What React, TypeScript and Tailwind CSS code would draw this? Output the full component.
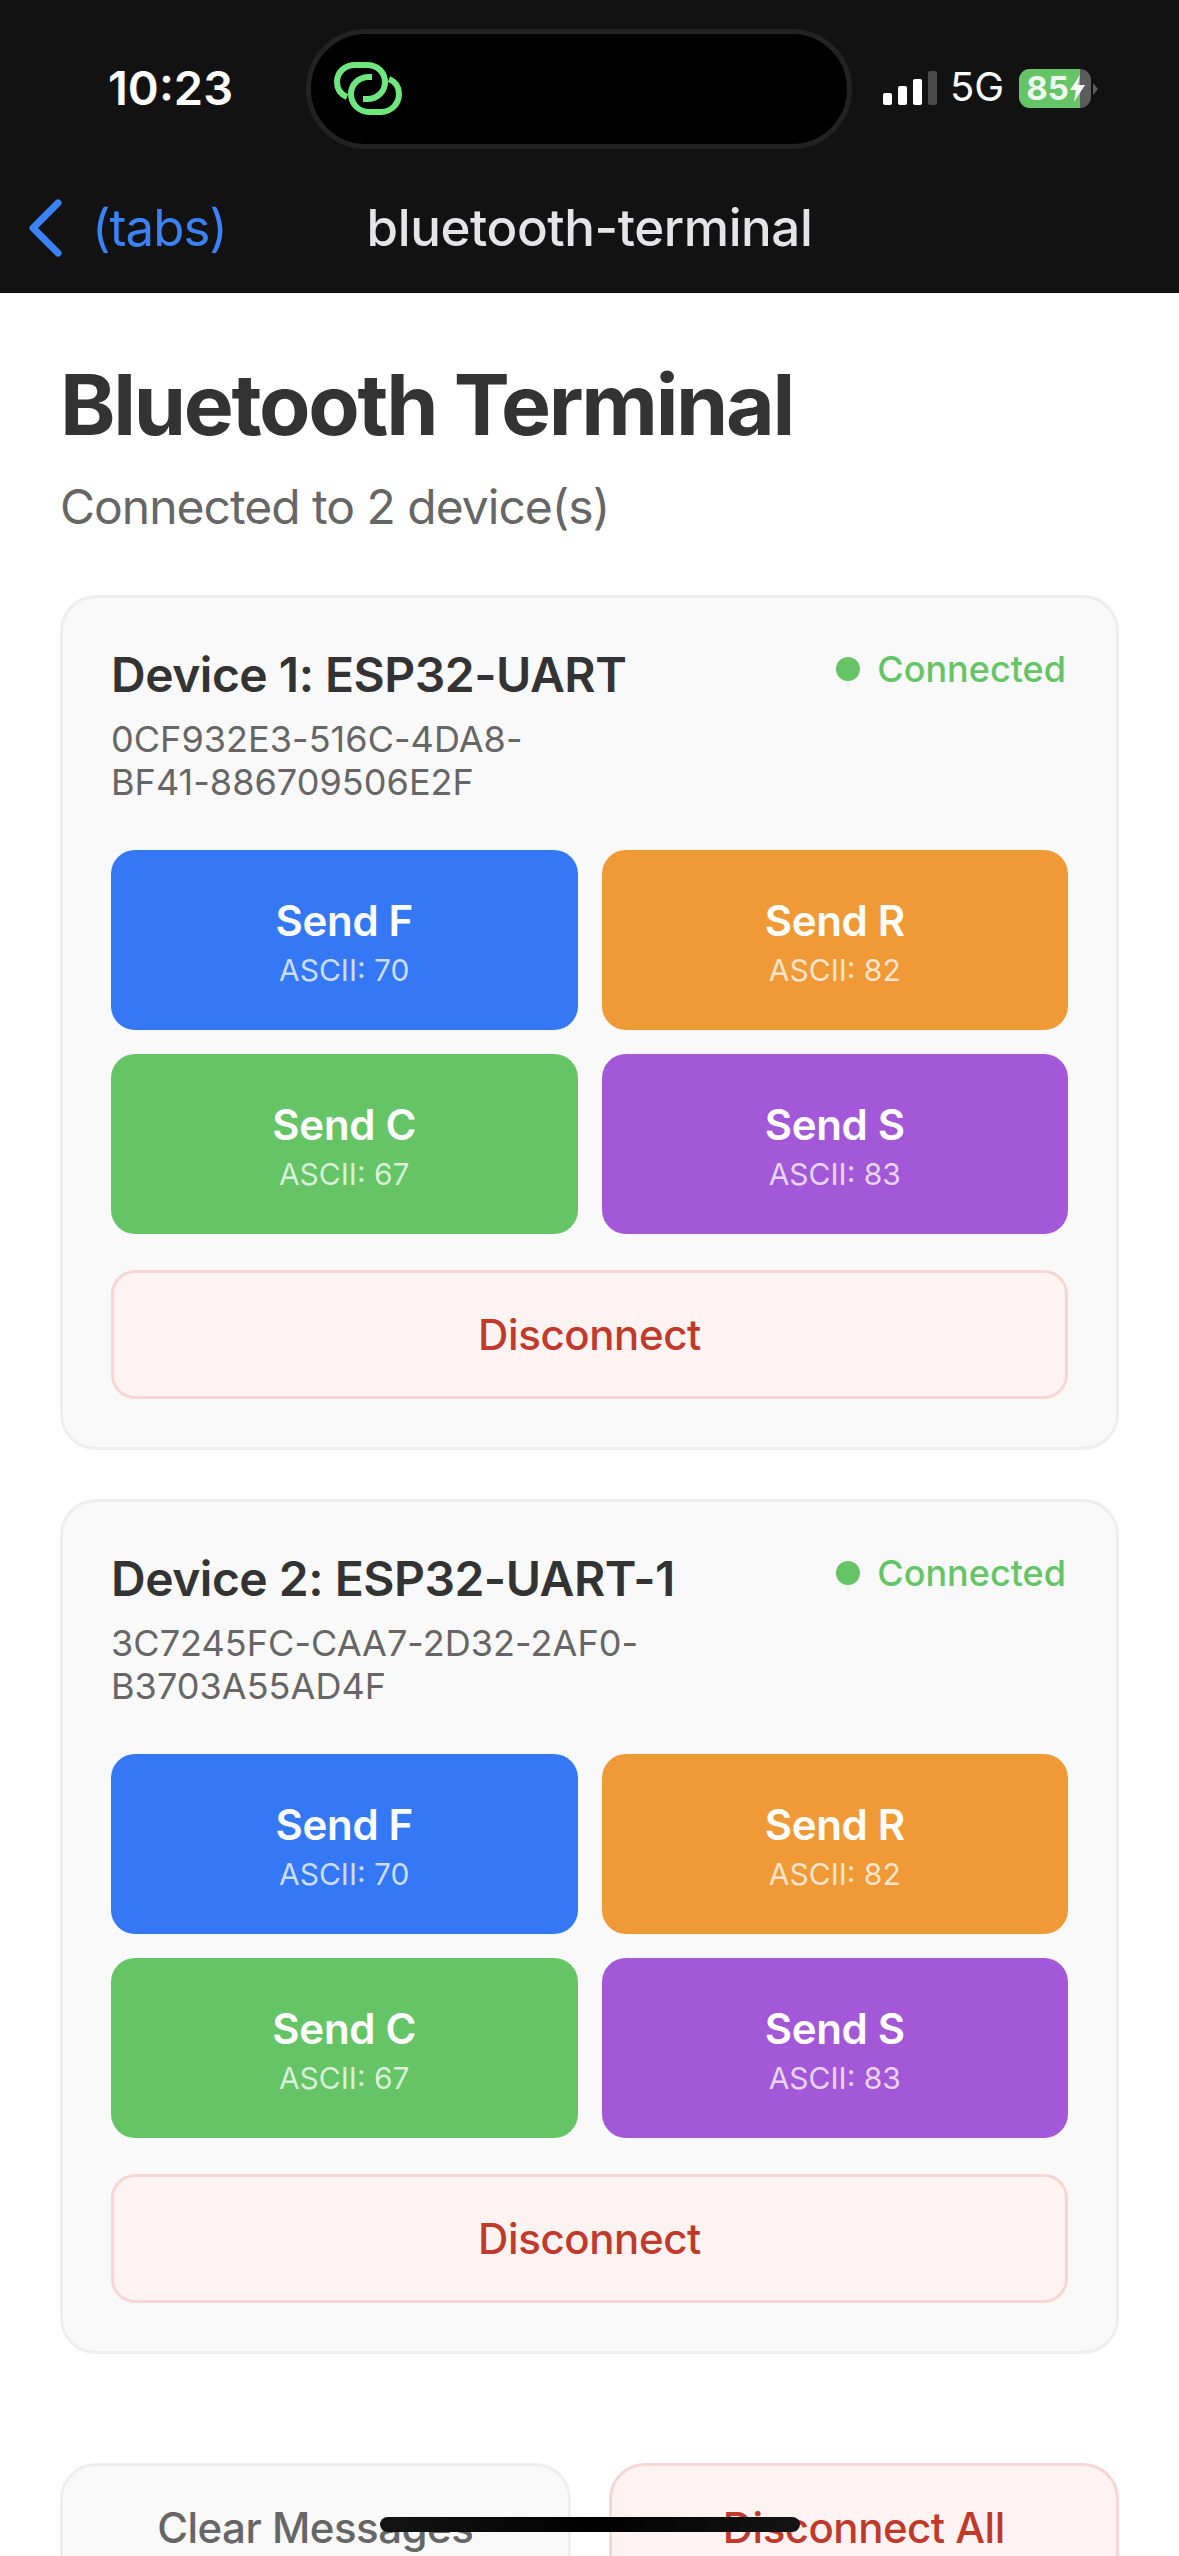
const actions = [
  { label: "Send F", code: 70, color: "bg-[#3478f6]" },
  { label: "Send R", code: 82, color: "bg-[#f09a37]" },
  { label: "Send C", code: 67, color: "bg-[#65c466]" },
  { label: "Send S", code: 83, color: "bg-[#a358d7]" },
];

function LinkIcon() {
  return (
    <svg width="68" height="54" viewBox="0 0 68 54" fill="none" stroke="#6fe77f" strokeWidth="6" strokeLinecap="butt">
      <path d="M13 35 C6 32 3 26 3 20 C3 10 11 3 21 3 H33 C43 3 51 10 51 20 C51 30 43 37 33 37 H29" />
      <path d="M55 17 C62 20 65 26 65 32 C65 42 57 50 47 50 H35 C25 50 17 42 17 32 C17 22 25 15 35 15 H38" />
    </svg>
  );
}

function StatusBar() {
  return (
    <div className="relative h-[158px]">
      <span className="absolute left-[108px] top-[60px] text-[47px] leading-[56px] font-semibold text-white">10:23</span>
      <div className="absolute left-[306px] top-[29px] flex h-[120px] w-[546px] items-center rounded-[60px] border-[5px] border-[#222222] bg-black pl-[23px]">
        <LinkIcon />
      </div>
      <div className="absolute left-[883px] top-[68px] flex h-[40px] items-end gap-[6px] pb-[3px]">
        <div className="h-[12px] w-[9px] rounded-[2px] bg-white" />
        <div className="h-[19px] w-[9px] rounded-[2px] bg-white" />
        <div className="h-[26px] w-[9px] rounded-[2px] bg-white" />
        <div className="h-[34px] w-[9px] rounded-[2px] bg-[#4a4a4a]" />
        <span className="ml-[7px] text-[40px] leading-[36px] text-white">5G</span>
        <div className="relative ml-[9px] -mb-[3px] flex h-[39px] w-[72px] items-center overflow-hidden rounded-[11px] bg-[#5c5c5e]">
          <div className="h-full w-[61px] bg-[#65c466]" />
          <span className="absolute left-[7px] text-[33px] leading-[39px] font-bold text-[#f1f8ef]">85</span>
          <svg className="absolute left-[51px] top-[6px]" width="15" height="27" viewBox="0 0 15 27" fill="#ffffff">
            <path d="M10 0 L0 15 H6 L4 27 L15 10 H8 Z" />
          </svg>
        </div>
        <svg className="-ml-[4px] mb-[10px]" width="5" height="12" viewBox="0 0 5 12" fill="#5c5c5e">
          <path d="M0 0 L5 6 L0 12 Z" />
        </svg>
      </div>
    </div>
  );
}

function NavBar() {
  return (
    <div className="relative flex h-[135px] items-start justify-center bg-[#121212] pt-[40px]">
      <div className="absolute left-[28px] top-[40px] flex items-center gap-[30px]">
        <svg width="34" height="58" viewBox="0 0 34 58" fill="none" stroke="#3b82f6" strokeWidth="7" strokeLinecap="round" strokeLinejoin="round">
          <path d="M30 4 L5 29 L30 54" />
        </svg>
        <span className="text-[51px] leading-[60px] tracking-[-1px] text-[#3b82f6]">(tabs)</span>
      </div>
      <span className="text-[51px] leading-[60px] tracking-[-0.4px] font-medium text-[#e5e5e7]">bluetooth-terminal</span>
    </div>
  );
}

function DeviceCard({ name, id }: { name: string; id: string[] }) {
  return (
    <section className="rounded-[36px] border-[3px] border-[#eeeeee] bg-[#f9f9f9] p-[48px]">
      <div className="flex h-[204px] items-start justify-between">
        <div>
          <h2 className="whitespace-nowrap text-[48px] leading-[58px] tracking-[-0.5px] font-semibold text-[#333333]">{name}</h2>
          <p className="mt-[14px] whitespace-nowrap text-[36px] leading-[43px] tracking-[0.05px] text-[#666666]">
            {id[0]}
            <br />
            {id[1]}
          </p>
        </div>
        <div className="-mt-[2px] flex items-center gap-[17px] pr-[2px]">
          <span className="h-[24px] w-[24px] rounded-full bg-[#65c466]" />
          <span className="text-[36px] leading-[50px] font-medium text-[#65c466]">Connected</span>
        </div>
      </div>
      <div className="grid grid-cols-2 gap-[24px]">
        {actions.map((a) => (
          <button key={a.label} className={`flex h-[180px] flex-col items-center justify-center rounded-[24px] pt-[3px] ${a.color}`}>
            <span className="text-[42px] leading-[52px] tracking-[-0.3px] font-semibold text-white">{a.label}</span>
            <span className="mt-[5px] text-[30px] leading-[36px] text-white/75">ASCII: {a.code}</span>
          </button>
        ))}
      </div>
      <button className="mt-[36px] flex h-[129px] w-full items-center justify-center rounded-[24px] border-[3px] border-[#f7d6d6] bg-[#fdf3f3] text-[42px] tracking-[-0.4px] font-medium text-[#c0392b]">
        Disconnect
      </button>
    </section>
  );
}

export default function App() {
  return (
    <div className="relative h-[2556px] w-[1179px] overflow-hidden bg-white font-['Inter',sans-serif]">
      <header className="bg-[#121212]">
        <StatusBar />
        <NavBar />
      </header>
      <main className="px-[60px] pt-[56px]">
        <h1 className="text-[84px] leading-[112px] tracking-[-2.3px] font-bold text-[#333333]">Bluetooth Terminal</h1>
        <p className="mt-[17px] text-[48px] leading-[58px] tracking-[-1px] text-[#666666]">Connected to 2 device(s)</p>
        <div className="mt-[59px] flex flex-col gap-[49px]">
          <DeviceCard name="Device 1: ESP32-UART" id={["0CF932E3-516C-4DA8-", "BF41-886709506E2F"]} />
          <DeviceCard name="Device 2: ESP32-UART-1" id={["3C7245FC-CAA7-2D32-2AF0-", "B3703A55AD4F"]} />
        </div>
        <div className="mt-[109px] grid grid-cols-2 gap-[38px]">
          <button className="h-[129px] rounded-[36px] border-[3px] border-[#eeeeee] bg-[#f9f9f9] text-[42px] tracking-[-0.5px] font-medium text-[#666666]">
            Clear Messages
          </button>
          <button className="h-[129px] rounded-[36px] border-[3px] border-[#f7d6d6] bg-[#fdf3f3] text-[42px] tracking-[-0.5px] font-medium text-[#c0392b]">
            Disconnect All
          </button>
        </div>
      </main>
      <div className="absolute left-[380px] top-[2517px] h-[15px] w-[420px] rounded-full bg-[linear-gradient(90deg,#141414,#000000_50%,#141414)]" />
    </div>
  );
}
